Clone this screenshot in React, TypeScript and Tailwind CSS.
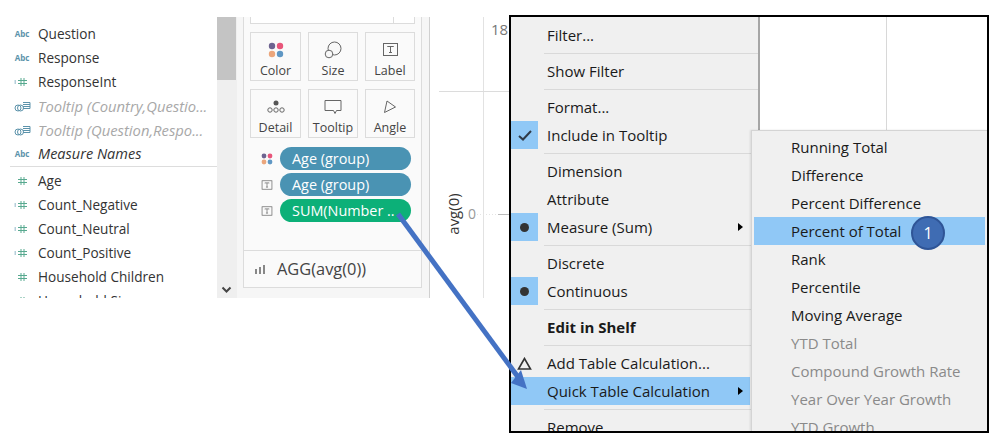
const TABLEAU = "font-['Open_Sans',sans-serif]"

type FieldKind = 'abc' | 'hash' | 'calc' | 'tip'

const dimensions: { name: string; kind: FieldKind; style?: string }[] = [
  { name: 'Question', kind: 'abc' },
  { name: 'Response', kind: 'abc' },
  { name: 'ResponseInt', kind: 'calc' },
  { name: 'Tooltip (Country,Questio...', kind: 'tip', style: 'italic text-[14.8px] text-[#a8a8a8]' },
  { name: 'Tooltip (Question,Respo...', kind: 'tip', style: 'italic text-[14.8px] text-[#a8a8a8]' },
  { name: 'Measure Names', kind: 'abc', style: 'italic text-[14.5px]' },
]

const measures: { name: string; kind: FieldKind }[] = [
  { name: 'Age', kind: 'hash' },
  { name: 'Count_Negative', kind: 'calc' },
  { name: 'Count_Neutral', kind: 'calc' },
  { name: 'Count_Positive', kind: 'calc' },
  { name: 'Household Children', kind: 'hash' },
  { name: 'Household Size', kind: 'hash' },
]

function HashIcon({ prefix }: { prefix?: boolean }) {
  return (
    <svg width="16" height="10" viewBox="0 0 16 10" fill="none" stroke="#57a98f" strokeWidth="1">
      {prefix && <path d="M0.5 4h1.5M0.5 6h1.5" stroke="#6a9fb5" />}
      <path d="M7 1v8M10 1v8M4 3.5h9M4 6.5h9" />
    </svg>
  )
}

function FieldIcon({ kind }: { kind: FieldKind }) {
  if (kind === 'abc') {
    return <span className="text-[8px] font-bold leading-none text-[#5c93ab]">Abc</span>
  }
  if (kind === 'tip') {
    return (
      <svg width="17" height="11" viewBox="0 0 17 11" fill="none" stroke="#5c93ab" strokeWidth="1">
        <circle cx="4" cy="7" r="3" />
        <circle cx="6.5" cy="7" r="3" />
        <path d="M9 1.5h7v6H9M9 3.5h7M9 5.5h7" />
      </svg>
    )
  }
  return <HashIcon prefix={kind === 'calc'} />
}

function FieldRow({ name, kind, style }: { name: string; kind: FieldKind; style?: string }) {
  return (
    <div className="flex h-6 items-center">
      <div className="-mr-[6px] flex w-[44px] shrink-0 justify-center">
        <FieldIcon kind={kind} />
      </div>
      <span className={`whitespace-nowrap text-[13.6px] text-[#333] ${style ?? ''}`}>{name}</span>
    </div>
  )
}

function ColorDots({ size = 16 }: { size?: number }) {
  return (
    <svg width={size} height={size} viewBox="0 0 16 16">
      <circle cx="4" cy="4" r="3.2" fill="#6d6390" />
      <circle cx="12" cy="4" r="3.2" fill="#e8567a" />
      <circle cx="4" cy="12" r="3.2" fill="#eba67c" />
      <circle cx="12" cy="12" r="3.2" fill="#5f97c4" />
    </svg>
  )
}

function LabelIcon({ size = 17 }: { size?: number }) {
  return (
    <svg width={size} height={size} viewBox="0 0 17 17" fill="none" stroke="#666" strokeWidth="1">
      <rect x="1.5" y="2.5" width="14" height="12" />
      <path d="M5.5 6V5.5h6V6M8.5 5.5v6M7 11.5h3" />
    </svg>
  )
}

const markCards = [
  {
    label: 'Color',
    icon: <ColorDots />,
  },
  {
    label: 'Size',
    icon: (
      <svg width="18" height="18" viewBox="0 0 18 18" fill="none" stroke="#666" strokeWidth="1">
        <circle cx="10.5" cy="7.5" r="6.5" fill="#f8f8f8" />
        <circle cx="5" cy="13" r="3.8" fill="#f8f8f8" />
      </svg>
    ),
  },
  {
    label: 'Label',
    icon: <LabelIcon />,
  },
  {
    label: 'Detail',
    icon: (
      <svg width="20" height="14" viewBox="0 0 20 14" fill="none" stroke="#666" strokeWidth="1">
        <circle cx="10" cy="3" r="2.5" fill="#555" stroke="none" />
        <circle cx="4" cy="10" r="2.2" />
        <circle cx="10" cy="10" r="2.2" />
        <circle cx="16" cy="10" r="2.2" />
      </svg>
    ),
  },
  {
    label: 'Tooltip',
    icon: (
      <svg width="18" height="16" viewBox="0 0 18 16" fill="none" stroke="#666" strokeWidth="1">
        <path d="M1 1.5h16v10h-4.5l-1.5 3-1.5-3H1z" />
      </svg>
    ),
  },
  {
    label: 'Angle',
    icon: (
      <svg width="14" height="14" viewBox="0 0 14 14" fill="none" stroke="#666" strokeWidth="1">
        <path d="M4 1l8.5 6L1.5 12.5z" />
      </svg>
    ),
  },
]

const pills = [
  { text: 'Age (group)', bg: 'bg-[#4a93b3]', icon: <ColorDots size={12} /> },
  { text: 'Age (group)', bg: 'bg-[#4a93b3]', icon: <LabelIcon size={12} /> },
  { text: 'SUM(Number ..', bg: 'bg-[#0cb078]', icon: <LabelIcon size={12} /> },
]

function DataList() {
  return (
    <div className="flex w-[237px] shrink-0">
      <div className="w-[217px] overflow-hidden pt-[5px]">
        {dimensions.map((f) => (
          <FieldRow key={f.name} {...f} />
        ))}
        <div className="mb-[2px] ml-[10px] h-px bg-[#ddd]" />
        {measures.map((f) => (
          <FieldRow key={f.name} {...f} />
        ))}
      </div>
      <div className="flex w-5 flex-col justify-between bg-[#efefef]">
        <div className="h-[63px] w-[19px] bg-[#c4c4c4]" />
        <svg className="mb-[4px] ml-[4px]" width="11" height="8" viewBox="0 0 11 8" fill="none" stroke="#444" strokeWidth="2">
          <path d="M1.5 1.5l4 4 4-4" />
        </svg>
      </div>
    </div>
  )
}

function MarksPanel() {
  return (
    <div className="w-[193px] shrink-0 border-r border-[#d0d0d0] bg-[#f6f6f6] pb-[10px] pl-[6px] pr-[7px]">
      <div className="flex h-full flex-col border border-t-0 border-[#dcdcdc] bg-[#fafafa]">
        <div className="ml-[6px] flex h-[7px] w-[165px] justify-end border border-t-0 border-[#dcdcdc] bg-white">
          <div className="w-[21px] border-l border-[#dcdcdc]" />
        </div>
        <div className="ml-[6px] mt-2 grid w-[165px] grid-cols-[51px_50px_50px] gap-x-[7px] gap-y-2">
          {markCards.map((c) => (
            <div key={c.label} className="flex h-[49px] flex-col items-center border border-[#dcdcdc] bg-[#fafafa]">
              <div className="flex h-[30px] items-center pt-[4px]">{c.icon}</div>
              <span className="text-[12.5px] leading-[18px] text-[#444]">{c.label}</span>
            </div>
          ))}
        </div>
        <div className="mt-[9px] flex flex-col gap-[3px]">
          {pills.map((p, i) => (
            <div key={i} className="flex items-center">
              <div className="flex w-[36px] justify-center pl-[9px]">{p.icon}</div>
              <div className={`flex h-[23px] w-[131px] items-center rounded-full pl-3 text-[14.4px] text-white ${p.bg}`}>
                {p.text}
              </div>
            </div>
          ))}
        </div>
        <div className="mt-auto flex h-[37px] items-center gap-[12px] border-t border-[#dcdcdc] pl-[11px]">
          <svg width="10" height="9" viewBox="0 0 10 9" fill="#888">
            <path d="M0 4h2v5H0zM4 2h2v7H4zM8 0h2v9H8z" />
          </svg>
          <span className="text-[16.4px] text-[#444]">AGG(avg(0))</span>
        </div>
      </div>
    </div>
  )
}

function ChartPeek() {
  return (
    <svg className="block shrink-0" width="80" height="281" viewBox="430 17 80 281">
      <path d="M483.5 17v281" stroke="#e2e2e2" />
      <path d="M439 91.5h71" stroke="#dcdcdc" />
      <path d="M477 214.5h20" stroke="#e4e4e4" strokeDasharray="1 2" />
      <path d="M498 214.5h12" stroke="#bbb" />
      <text x="491" y="35" fontSize="15" fill="#777" fontFamily="Open Sans">18</text>
      <text x="468" y="219" fontSize="14" fill="#999" fontFamily="Open Sans">0</text>
      <text transform="translate(459 214) rotate(-90)" textAnchor="middle" fontSize="15" fill="#333" fontFamily="Open Sans">avg(0)</text>
    </svg>
  )
}

type MenuEntry = { label: string; mark?: 'check' | 'dot' | 'delta'; arrow?: boolean; bold?: boolean; hot?: boolean }

const menuGroups: MenuEntry[][] = [
  [{ label: 'Filter...' }],
  [{ label: 'Show Filter' }],
  [{ label: 'Format...' }, { label: 'Include in Tooltip', mark: 'check' }],
  [{ label: 'Dimension' }, { label: 'Attribute' }, { label: 'Measure (Sum)', mark: 'dot', arrow: true }],
  [{ label: 'Discrete' }, { label: 'Continuous', mark: 'dot' }],
  [{ label: 'Edit in Shelf', bold: true }],
  [{ label: 'Add Table Calculation...', mark: 'delta' }, { label: 'Quick Table Calculation', arrow: true, hot: true }],
  [{ label: 'Remove' }],
]

const tableCalcs = [
  { label: 'Running Total' },
  { label: 'Difference' },
  { label: 'Percent Difference' },
  { label: 'Percent of Total', hot: true },
  { label: 'Rank' },
  { label: 'Percentile' },
  { label: 'Moving Average' },
  { label: 'YTD Total', off: true },
  { label: 'Compound Growth Rate', off: true },
  { label: 'Year Over Year Growth', off: true },
  { label: 'YTD Growth', off: true },
]

function MenuMark({ mark }: { mark: MenuEntry['mark'] }) {
  if (mark === 'check') {
    return (
      <div className="flex h-7 w-[27px] items-center justify-center bg-[#90c8f6]">
        <svg width="14" height="11" viewBox="0 0 14 11" fill="none" stroke="#2f3a48" strokeWidth="2">
          <path d="M1 6l4 3.5L13 1" />
        </svg>
      </div>
    )
  }
  if (mark === 'dot') {
    return (
      <div className="flex h-7 w-[27px] items-center justify-center bg-[#90c8f6]">
        <div className="h-[9px] w-[9px] rounded-full bg-[#333]" />
      </div>
    )
  }
  if (mark === 'delta') {
    return (
      <div className="flex h-7 w-[27px] items-center justify-center">
        <svg width="15" height="13" viewBox="0 0 15 13" fill="none" stroke="#333" strokeWidth="1.6">
          <path d="M7.5 1.5L1.5 12h12z" />
        </svg>
      </div>
    )
  }
  return <div className="w-[27px]" />
}

function ContextMenu() {
  return (
    <div className="h-full w-[249px] overflow-hidden border-r-2 border-[#a6a6a6] bg-[#f0f0f0] pt-[4px] font-['Open_Sans',sans-serif]">
      {menuGroups.map((group, i) => (
        <div key={i}>
          {i > 0 && (
            <div className="flex h-2 items-center pl-[33px]">
              <div className="h-px w-full bg-[#d9d9d9]" />
            </div>
          )}
          {group.map((item) => (
            <div key={item.label} className={`flex h-7 w-[239px] items-center text-[15px] text-[#1a1a1a] ${item.hot ? 'bg-[#90c8f6]' : ''}`}>
              <MenuMark mark={item.mark} />
              <span className={`ml-[9px] ${item.bold ? 'font-bold' : ''}`}>{item.label}</span>
              {item.arrow && <span className="ml-auto mr-[7px] h-0 w-0 border-y-[4px] border-l-[5px] border-y-transparent border-l-black" />}
            </div>
          ))}
        </div>
      ))}
    </div>
  )
}

function TableCalcMenu() {
  return (
    <div className="absolute bottom-0 left-[240px] h-[301px] w-[236px] overflow-hidden border-l border-t border-[#d4d4d4] bg-[#f0f0f0] pl-[2px] pt-[2px] font-['Open_Sans',sans-serif] shadow-[-1px_0_2px_rgba(0,0,0,0.1)]">
      {tableCalcs.map((c) => (
        <div
          key={c.label}
          className={`relative flex h-7 w-[231px] items-center pl-[37px] text-[15px] ${c.hot ? 'bg-[#90c8f6]' : ''} ${c.off ? 'text-[#8a8a8a]' : 'text-[#1a1a1a]'}`}
        >
          {c.label}
          {c.hot && (
            <span className="absolute left-[157px] top-[-1px] flex h-[34px] w-[34px] items-center justify-center rounded-full border-2 border-[#2f5597] bg-[#3f6cb3] text-[16px] text-white">
              1
            </span>
          )}
        </div>
      ))}
    </div>
  )
}

export default function App() {
  return (
    <div className={`relative h-[441px] w-[997px] overflow-hidden bg-white ${TABLEAU}`}>
      <div className="mt-[17px] flex h-[281px] w-[510px]">
        <DataList />
        <MarksPanel />
        <ChartPeek />
      </div>

      {/* cropped context menu, framed in black */}
      <div className="absolute left-[509px] top-[15px] h-[418px] w-[480px] border-2 border-black bg-white">
        <div className="absolute left-[375px] top-0 h-[115px] w-px bg-[#d8d8d8]" />
        <ContextMenu />
        <TableCalcMenu />
      </div>

      <svg className="pointer-events-none absolute left-0 top-0" width="997" height="441">
        <path d="M398 214L518 377" stroke="#4472c4" strokeWidth="5" fill="none" />
        <path d="M527 389L511 383L521 370z" fill="#4472c4" />
      </svg>
    </div>
  )
}
